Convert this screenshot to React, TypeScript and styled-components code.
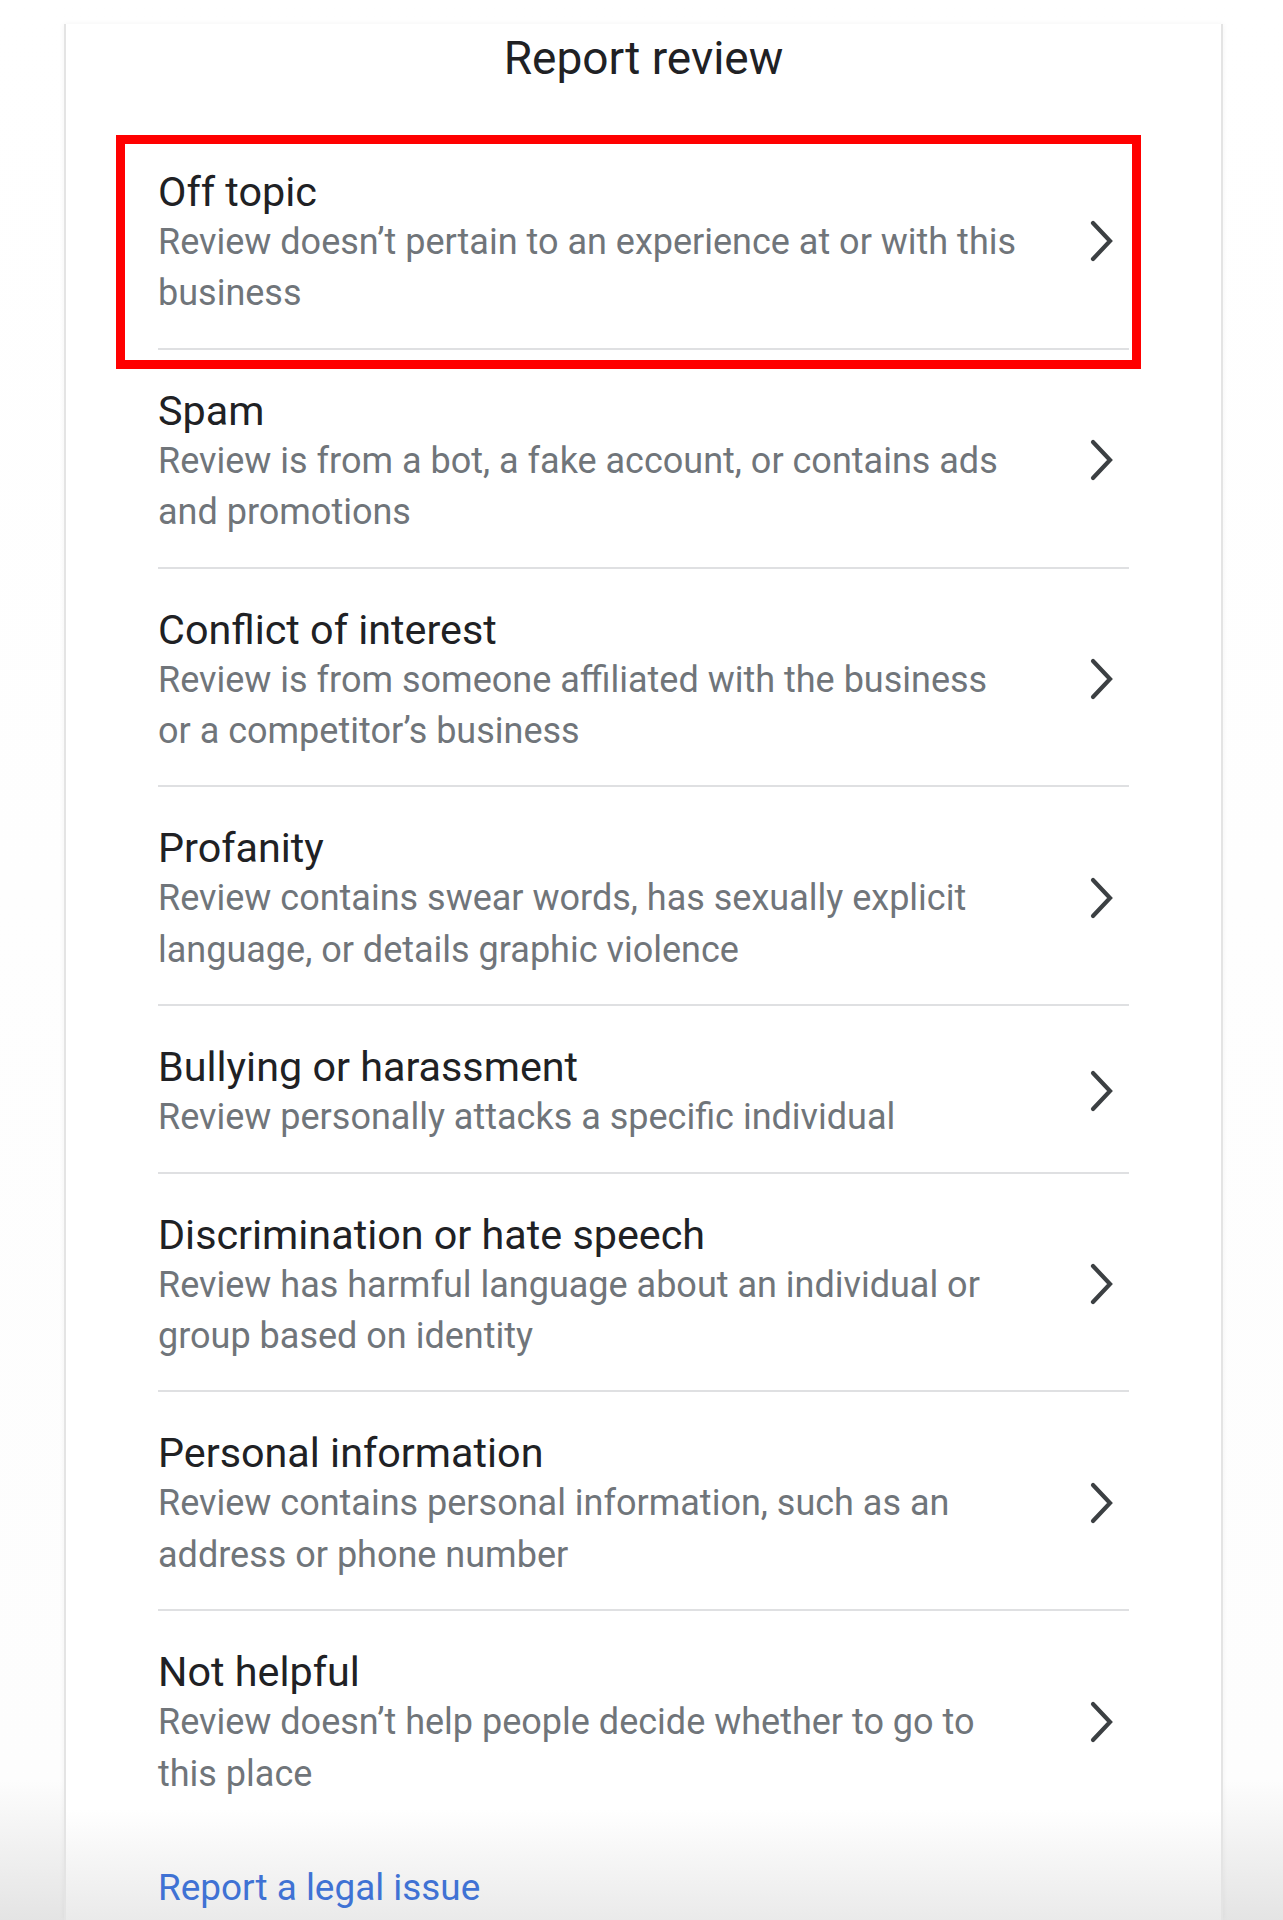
import { FC } from 'react';
import styled, { createGlobalStyle } from 'styled-components';

const GlobalStyle = createGlobalStyle`
  html, body {
    margin: 0;
    padding: 0;
    height: 100%;
  }

  body {
    font-family: Roboto, "Noto Sans", Arial, sans-serif;
    background: linear-gradient(180deg, #ffffff 0, #fdfdfd 1780px, #e4e4e4 100%);
    -webkit-font-smoothing: antialiased;
  }
`;

const Page = styled.div`
  min-height: 100vh;
  padding: 24px 0 0 64px;
  box-sizing: border-box;
  display: flex;
`;

const Panel = styled.div`
  width: 1159px;
  min-height: calc(100vh - 24px);
  box-sizing: border-box;
  padding: 6px 92px 0;
  background: linear-gradient(180deg, #ffffff 0, #ffffff calc(100% - 110px), #eaeaea 100%);
  border-left: 2px solid #e4e4e4;
  border-right: 2px solid #e4e4e4;
  box-shadow: 0 0 6px rgba(0, 0, 0, 0.05);
`;

const Heading = styled.h1`
  margin: 0 0 45px;
  font-size: 46px;
  line-height: 56px;
  font-weight: 400;
  color: #202124;
  text-align: center;
`;

const List = styled.div`
  display: flex;
  flex-direction: column;
`;

const Item = styled.div<{ $highlighted?: boolean }>`
  position: relative;
  display: grid;
  grid-template-columns: 1fr 25px;
  column-gap: 68px;
  align-items: center;
  padding: 36px 15px 28px 0;
  border-bottom: 2px solid #dfe0e2;
  cursor: pointer;

  &:last-child {
    border-bottom: none;
  }

  ${({ $highlighted }) => $highlighted && `
    &::after {
      content: '';
      position: absolute;
      top: 4px;
      bottom: -21px;
      left: -42px;
      right: -12px;
      border: 9px solid #ff0000;
      pointer-events: none;
    }
  `}
`;

const Texts = styled.div`
  display: flex;
  flex-direction: column;
`;

const Title = styled.div`
  font-size: 41.3px;
  line-height: 50px;
  color: #202124;
`;

const Description = styled.div`
  font-size: 36px;
  line-height: 51.4px;
  color: #70757a;
`;

const Chevron = styled.svg`
  width: 25px;
  height: 42px;
  margin-top: -4px;
  fill: none;
  stroke: #3c4043;
  stroke-width: 4.2;
  stroke-linecap: round;
  stroke-linejoin: miter;
`;

const LegalLink = styled.a`
  display: block;
  margin-top: 34px;
  font-size: 36.9px;
  line-height: 51px;
  color: #3f72d4;
  text-decoration: none;
`;

type Reason = { title: string; description: string };

const reasons: Reason[] = [
  { title: 'Off topic', description: 'Review doesn’t pertain to an experience at or with this business' },
  { title: 'Spam', description: 'Review is from a bot, a fake account, or contains ads and promotions' },
  { title: 'Conflict of interest', description: 'Review is from someone affiliated with the business or a competitor’s business' },
  { title: 'Profanity', description: 'Review contains swear words, has sexually explicit language, or details graphic violence' },
  { title: 'Bullying or harassment', description: 'Review personally attacks a specific individual' },
  { title: 'Discrimination or hate speech', description: 'Review has harmful language about an individual or group based on identity' },
  { title: 'Personal information', description: 'Review contains personal information, such as an address or phone number' },
  { title: 'Not helpful', description: 'Review doesn’t help people decide whether to go to this place' },
];

const ChevronRight: FC = () => (
  <Chevron viewBox="0 0 25 42">
    <polyline points="4,3 21,21 4,39" />
  </Chevron>
);

export default function App() {
  return (
    <>
      <GlobalStyle />
      <Page>
        <Panel>
          <Heading>Report review</Heading>
          <List>
            {reasons.map((r, i) => (
              <Item key={r.title} $highlighted={i === 0}>
                <Texts>
                  <Title>{r.title}</Title>
                  <Description>{r.description}</Description>
                </Texts>
                <ChevronRight />
              </Item>
            ))}
          </List>
          <LegalLink href="#">Report a legal issue</LegalLink>
        </Panel>
      </Page>
    </>
  );
}
